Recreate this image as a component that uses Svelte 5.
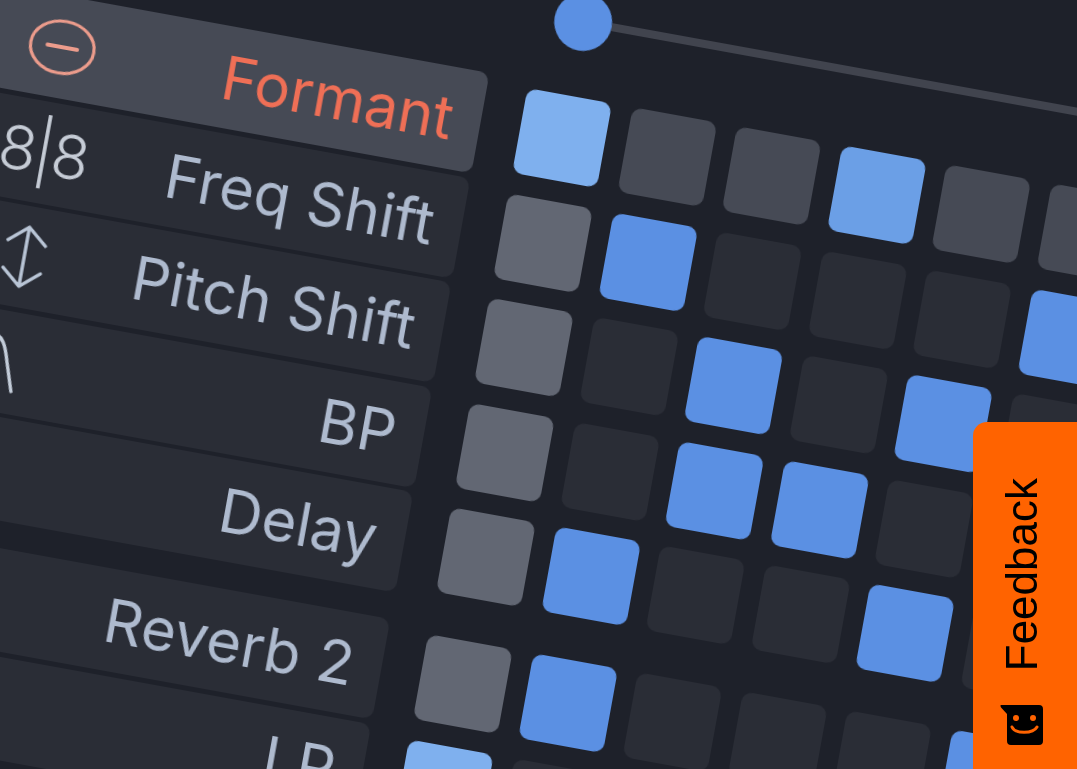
<script lang="ts">
  const rows = [
    { name: 'Formant', icon: 'minus', cells: 'Ahhbhhh', active: true },
    { name: 'Freq Shift', icon: 'ratio', cells: 'gsddds d' },
    { name: 'Pitch Shift', icon: 'arrows', cells: 'gdsdsdd' },
    { name: 'BP', icon: 'curve', cells: 'gdssddd' },
    { name: 'Delay', icon: 'ticks', cells: 'gsddsdd' },
    { name: 'Reverb 2', icon: '', cells: 'gsdddsd', first: true },
    { name: 'LP', icon: '', cells: 'Adddddd' }
  ];

  const kinds: Record<string, string> = {
    A: 'light',
    b: 'mid',
    h: 'hover',
    g: 'gray',
    s: 'blue',
    d: 'dark'
  };

  const cellsOf = (s: string) => s.replace(/ /g, '').split('').map((c) => kinds[c]);
</script>

<div class="stage">
  <div class="board">
    <div class="slider">
      <span class="thumb"></span>
      <span class="track"></span>
    </div>

    {#each rows as row}
      <div class="row" class:first={row.first}>
        <div class="label" class:active={row.active}>
          <span class="icon">
            {#if row.icon === 'minus'}
              <svg width="76" height="64" viewBox="0 0 76 64" fill="none" stroke="#ec9c8c" stroke-width="3.2" stroke-linecap="round">
                <ellipse cx="38" cy="32" rx="32" ry="26" />
                <path d="M23 32h30" stroke-width="4" />
              </svg>
            {:else if row.icon === 'ratio'}
              <span class="ratio">8|8</span>
            {:else if row.icon === 'arrows'}
              <svg width="60" height="72" viewBox="0 0 60 72" fill="none" stroke="#b9c5d6" stroke-width="3.4" stroke-linecap="round" stroke-linejoin="round">
                <path d="M30 6v60M11 22 30 6l19 16M11 50l19 16 19-16" />
              </svg>
            {:else if row.icon === 'curve'}
              <svg width="60" height="72" viewBox="0 0 60 72" fill="none" stroke="#c3ccd9" stroke-width="3.4" stroke-linecap="round">
                <path d="M-30 8H8C24 8 28 22 32 36l9 28" />
              </svg>
            {:else if row.icon === 'ticks'}
              <svg width="60" height="40" viewBox="0 0 60 40" fill="none" stroke="#c3ccd9" stroke-width="4" stroke-linecap="round">
                <path d="M14 8v14" />
              </svg>
            {/if}
          </span>
          <span class="name">{row.name}</span>
        </div>
        <div class="cells">
          {#each cellsOf(row.cells) as kind}
            <span class="cell {kind}"></span>
          {/each}
        </div>
      </div>
    {/each}
  </div>

  <button class="feedback">
    <span class="feedback-text">Feedback</span>
    <svg width="44" height="42" viewBox="0 0 44 42">
      <path d="M1 1h38a4 4 0 0 1 4 4v32a4 4 0 0 1-4 4H11a4 4 0 0 1-4-4V10L1.500 4C.5 3 0 1 1 1Z" fill="#000" />
      <circle cx="16" cy="14" r="3" fill="#ff6300" />
      <circle cx="33" cy="14" r="3" fill="#ff6300" />
      <path d="M12 23c3 7 21 7 25 0" fill="none" stroke="#ff6300" stroke-width="3" stroke-linecap="round" />
    </svg>
  </button>
</div>

<style>
  :global(body) {
    margin: 0;
    background: #1e212a;
  }

  .stage {
    width: 1077px;
    height: 769px;
    overflow: hidden;
    position: relative;
    background: #1e212a;
    font-family: Inter, "Liberation Sans", sans-serif;
  }

  .board {
    width: 1600px;
    transform-origin: 0 0;
    transform: translate(-182px, -146.6px) rotate(10.3deg);
    filter: blur(0.5px);
  }

  .slider {
    display: flex;
    align-items: center;
    height: 58px;
    margin-bottom: 38px;
    padding-left: 754px;
  }

  .thumb {
    flex: none;
    width: 58px;
    height: 58px;
    border-radius: 50%;
    background: #5b90e3;
  }

  .track {
    flex: 1;
    height: 8px;
    background: #41444e;
  }

  .row {
    display: flex;
    align-items: center;
    gap: 40px;
    margin-bottom: 4.6px;
  }

  .row.first {
    margin-top: 27px;
  }

  .label {
    flex: none;
    box-sizing: border-box;
    width: 700px;
    height: 102px;
    display: flex;
    align-items: center;
    justify-content: space-between;
    padding: 0 28px 0 235px;
    border-radius: 10px;
    background: #2a2d36;
    color: #aebace;
    font-size: 60px;
    line-height: 1;
  }

  .label.active {
    background: #464a55;
    color: #ef6f56;
  }

  .icon {
    width: 80px;
    display: flex;
    align-items: center;
    justify-content: center;
  }

  .ratio {
    font-size: 62px;
    font-weight: 300;
    color: #c6ccd6;
    letter-spacing: -2px;
  }

  .cells {
    display: flex;
    gap: 20.6px;
  }

  .cell {
    flex: none;
    width: 86px;
    height: 86px;
    border-radius: 10px;
  }

  .light { background: #7fb0ee; }
  .mid { background: #6b9fe6; }
  .blue { background: #5b90e3; }
  .hover { background: #464a55; }
  .gray { background: #626773; }
  .dark { background: #2a2d36; }

  .feedback {
    position: absolute;
    top: 422px;
    right: 0;
    width: 104px;
    height: 347px;
    display: flex;
    flex-direction: column;
    align-items: center;
    gap: 33px;
    box-sizing: border-box;
    padding: 56px 6px 0 0;
    border: 0;
    border-radius: 14px 0 0 0;
    background: #ff6300;
    color: #000;
    font-family: "Liberation Sans", Arial, sans-serif;
    font-size: 44px;
  }

  .feedback-text {
    writing-mode: vertical-rl;
    transform: rotate(180deg);
    line-height: 1;
  }
</style>
